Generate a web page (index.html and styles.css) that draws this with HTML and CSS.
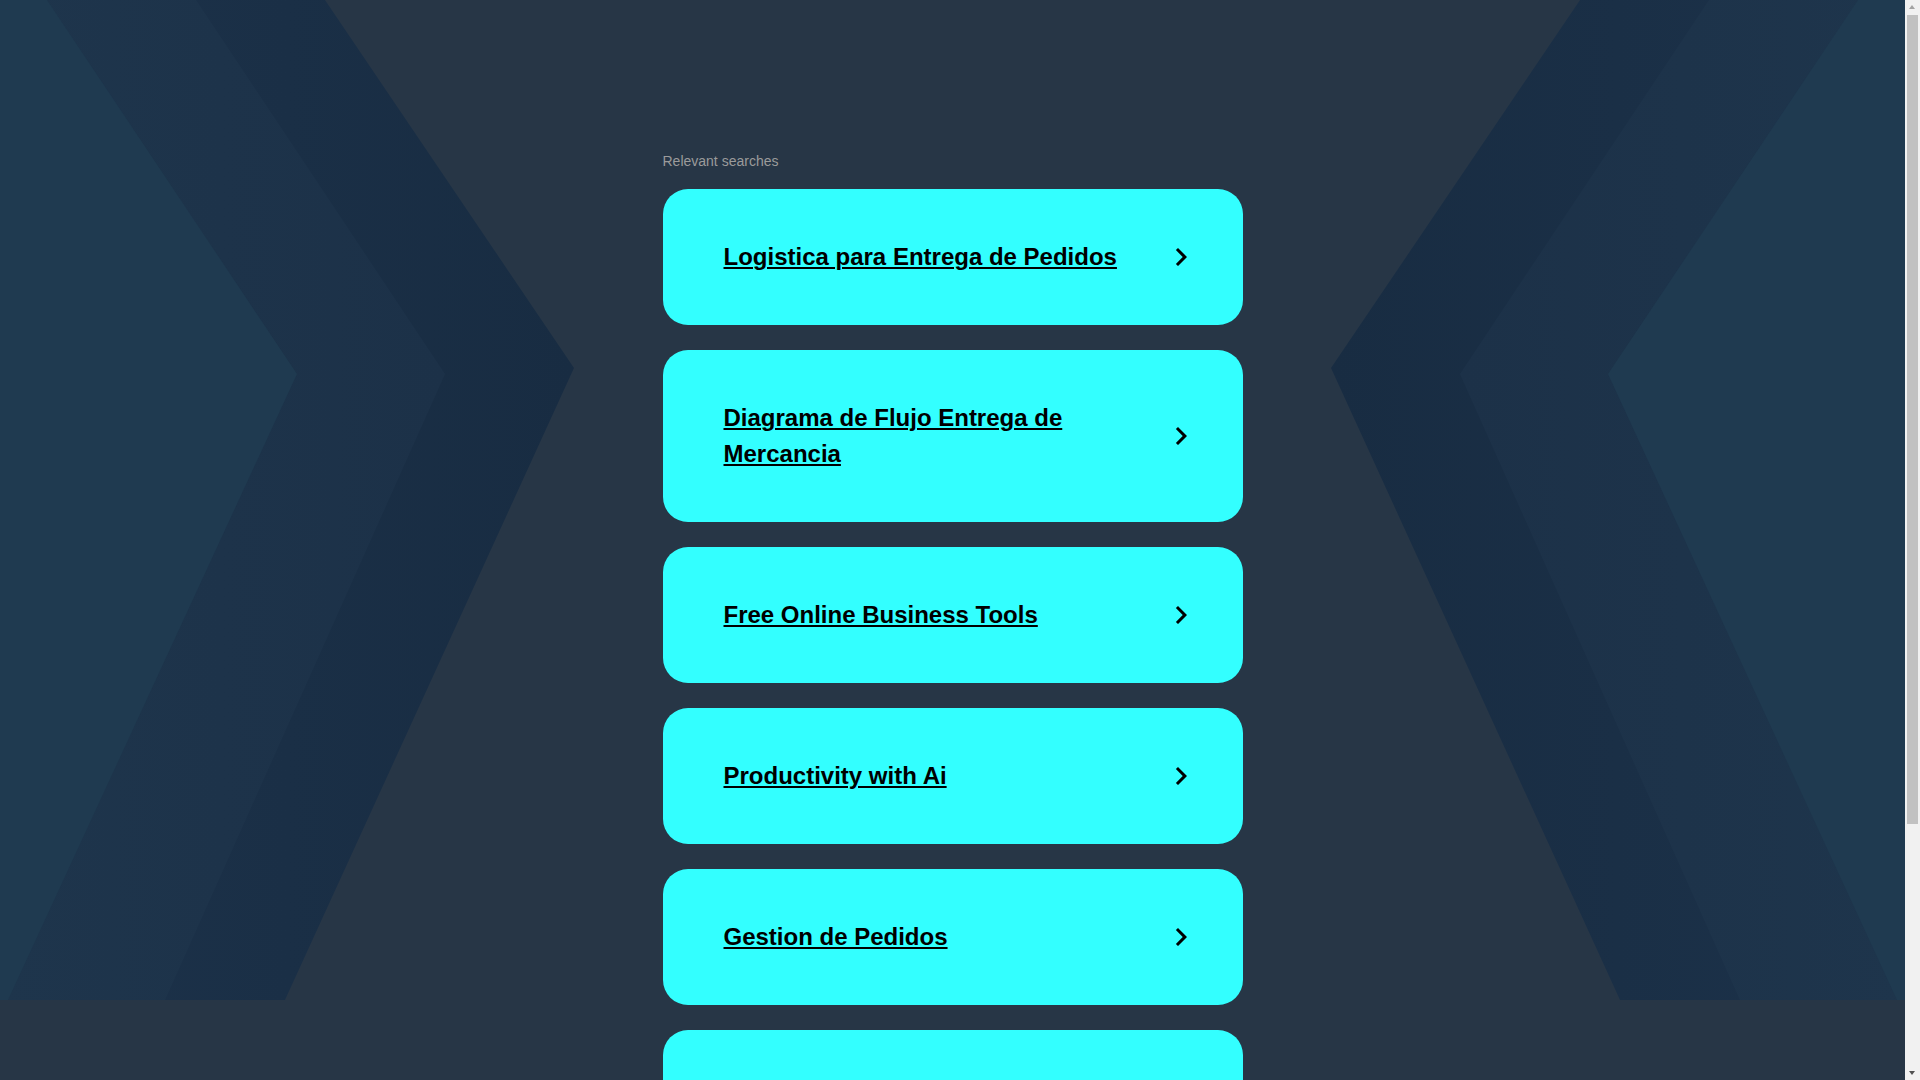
FILE: index.html
```html
<!DOCTYPE html>
<html lang="en">
<head>
<meta charset="utf-8">
<title>Relevant searches</title>
<link rel="stylesheet" href="styles.css">
</head>
<body>
<div class="viewport">
  <div class="backdrop" aria-hidden="true">
    <svg class="backdrop-svg" viewBox="0 0 1905 1000" preserveAspectRatio="none">
      <defs>
        <linearGradient id="gOutL" x1="0" y1="0" x2="1" y2="0">
          <stop offset="0" stop-color="#1c324a"/>
          <stop offset="1" stop-color="#182c42"/>
        </linearGradient>
        <linearGradient id="gMidL" x1="0" y1="0" x2="1" y2="0">
          <stop offset="0" stop-color="#1e354c"/>
          <stop offset="1" stop-color="#1c3148"/>
        </linearGradient>
        <linearGradient id="gOutR" x1="1" y1="0" x2="0" y2="0">
          <stop offset="0" stop-color="#1c324a"/>
          <stop offset="1" stop-color="#182c42"/>
        </linearGradient>
        <linearGradient id="gMidR" x1="1" y1="0" x2="0" y2="0">
          <stop offset="0" stop-color="#1e354c"/>
          <stop offset="1" stop-color="#1c3148"/>
        </linearGradient>
      </defs>
      <polygon points="0,0 325,0 574,368 285,1000 0,1000" fill="url(#gOutL)"/>
      <polygon points="0,0 196,0 445,374 165,1000 0,1000" fill="url(#gMidL)"/>
      <polygon points="0,0 47,0 297,374 8,1000 0,1000" fill="#1f3a50"/>
      <polygon points="1905,0 1580,0 1331,368 1620,1000 1905,1000" fill="url(#gOutR)"/>
      <polygon points="1905,0 1709,0 1460,374 1740,1000 1905,1000" fill="url(#gMidR)"/>
      <polygon points="1905,0 1858,0 1608,374 1897,1000 1905,1000" fill="#1f3a50"/>
    </svg>
  </div>
  <main class="page">
    <section class="searches">
      <p class="searches-title">Relevant searches</p>
      <ul class="search-list">
        <li><a class="search-card" href="#"><span class="search-text">Logistica para Entrega de Pedidos</span><svg class="chev" viewBox="0 0 24 24"><path d="M10 6L8.59 7.41 13.17 12l-4.58 4.59L10 18l6-6z"/></svg></a></li>
        <li><a class="search-card" href="#"><span class="search-text">Diagrama de Flujo Entrega de Mercancia</span><svg class="chev" viewBox="0 0 24 24"><path d="M10 6L8.59 7.41 13.17 12l-4.58 4.59L10 18l6-6z"/></svg></a></li>
        <li><a class="search-card" href="#"><span class="search-text">Free Online Business Tools</span><svg class="chev" viewBox="0 0 24 24"><path d="M10 6L8.59 7.41 13.17 12l-4.58 4.59L10 18l6-6z"/></svg></a></li>
        <li><a class="search-card" href="#"><span class="search-text">Productivity with Ai</span><svg class="chev" viewBox="0 0 24 24"><path d="M10 6L8.59 7.41 13.17 12l-4.58 4.59L10 18l6-6z"/></svg></a></li>
        <li><a class="search-card" href="#"><span class="search-text">Gestion de Pedidos</span><svg class="chev" viewBox="0 0 24 24"><path d="M10 6L8.59 7.41 13.17 12l-4.58 4.59L10 18l6-6z"/></svg></a></li>
        <li><a class="search-card" href="#"><span class="search-text">Software de Logistica</span><svg class="chev" viewBox="0 0 24 24"><path d="M10 6L8.59 7.41 13.17 12l-4.58 4.59L10 18l6-6z"/></svg></a></li>
      </ul>
    </section>
  </main>
</div>
<div class="scrollbar" aria-hidden="true">
  <div class="sb-btn sb-up"></div>
  <div class="sb-track"><div class="sb-thumb"></div></div>
  <div class="sb-btn sb-down"></div>
</div>
</body>
</html>
```

FILE: styles.css
```css
html, body {
  margin: 0;
  padding: 0;
}

body {
  background: #273646;
  font-family: "Liberation Sans", Arial, sans-serif;
  min-height: 100vh;
}

.viewport {
  position: relative;
  margin-right: 15px;
}

.backdrop {
  position: absolute;
  top: 0;
  left: 0;
  width: 100%;
  height: 1000px;
  z-index: 0;
  overflow: hidden;
}

.backdrop-svg {
  display: block;
  width: 100%;
  height: 1000px;
}

.page {
  position: relative;
  z-index: 1;
  display: flex;
  justify-content: center;
  padding: 153px 0 234px;
}

.searches {
  width: 580px;
}

.searches-title {
  margin: 0 0 20px;
  font-size: 14px;
  line-height: 16px;
  color: #9b9b9b;
}

.search-list {
  list-style: none;
  margin: 0;
  padding: 0;
  display: flex;
  flex-direction: column;
  gap: 25px;
}

.search-card {
  display: flex;
  align-items: center;
  gap: 30px;
  padding: 50px 44px 50px 61px;
  background: #33ffff;
  border-radius: 25px;
  color: #000;
  text-decoration: none;
}

.search-text {
  flex: 1;
  font-size: 24px;
  line-height: 36px;
  font-weight: 700;
  text-decoration: underline;
  text-decoration-thickness: 2px;
  text-underline-offset: 2px;
}

.chev {
  flex: none;
  width: 36px;
  height: 36px;
  fill: #000;
}

/* emulated browser scrollbar */
.scrollbar {
  position: fixed;
  top: 0;
  right: 0;
  width: 15px;
  height: 100vh;
  background: #f1f1f1;
  display: flex;
  flex-direction: column;
  z-index: 10;
}

.sb-btn {
  flex: none;
  height: 15px;
  position: relative;
}

.sb-btn::after {
  content: "";
  position: absolute;
  left: 4px;
  width: 0;
  height: 0;
  border-left: 3.5px solid transparent;
  border-right: 3.5px solid transparent;
}

.sb-up::after {
  top: 5px;
  border-bottom: 4px solid #a3a3a3;
}

.sb-down::after {
  top: 6px;
  border-top: 4px solid #505050;
}

.sb-track {
  flex: 1;
  padding: 0 2px;
}

.sb-thumb {
  height: 77%;
  background: #c1c1c1;
}
```
